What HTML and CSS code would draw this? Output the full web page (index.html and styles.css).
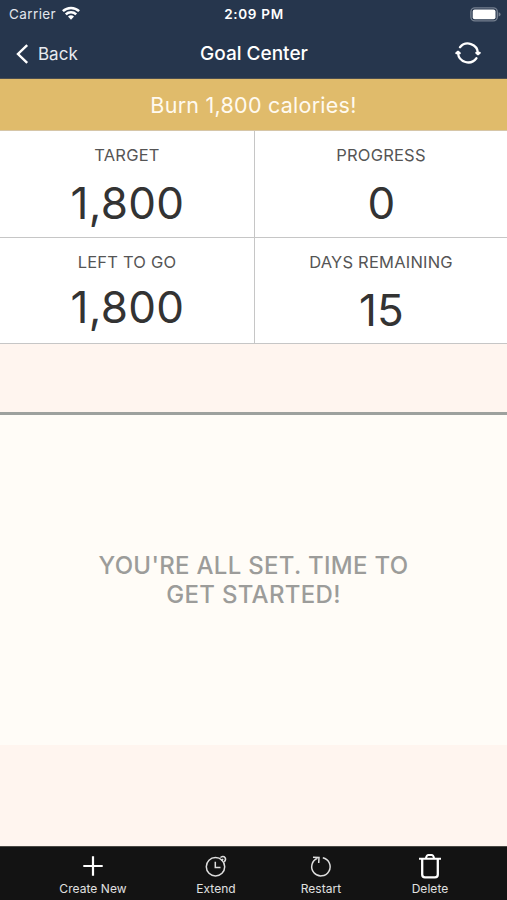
FILE: index.html
```
<!DOCTYPE html>
<html lang="en">
<head>
<meta charset="utf-8">
<title>Goal Center</title>
<link rel="stylesheet" href="styles.css">
</head>
<body>
<header class="header">
  <div class="status">
    <div class="carrier"><span>Carrier</span>
      <svg width="18" height="14" viewBox="0 0 18 14" fill="none" stroke="#fff" stroke-width="2.5"><path d="M.9 5.2a11.6 11.6 0 0 1 16.2 0M3.8 8.3a7.4 7.4 0 0 1 10.4 0"/><path d="M9 13.7 6 10.6a4.3 4.3 0 0 1 6 0Z" fill="#fff" stroke="none"/></svg>
    </div>
    <div class="time">2:09 PM</div>
    <svg class="battery" width="31" height="15" viewBox="0 0 31 15"><rect x=".9" y=".9" width="26.4" height="13" rx="4" fill="none" stroke="#747f8f" stroke-width="1.4"/><rect x="2.7" y="2.6" width="22.8" height="9.6" rx="2" fill="#fff"/><path d="M28.6 5.2q2 .6 2 2.2t-2 2.2Z" fill="#747f8f"/></svg>
  </div>
  <nav class="nav">
    <div class="back">
      <svg width="13" height="20" viewBox="0 0 13 20" fill="none" stroke="#fff" stroke-width="2.4"><path d="M11.2 1.2 2 10l9.2 8.8"/></svg>
      <span>Back</span>
    </div>
    <h1 class="title">Goal Center</h1>
    <svg class="sync" width="26" height="24" viewBox="0 0 26 24" fill="none" stroke="#fff" stroke-width="2.3" stroke-linecap="round"><path d="M5 6.2A10.2 10.2 0 0 1 23 12M21.4 17.2A10.2 10.2 0 0 1 3 12"/><path d="m21.4 11.8 1.6 1.4 1.6-1.4ZM1.4 12.2 3 10.8l1.6 1.4Z" fill="#fff" stroke-linejoin="round"/></svg>
  </nav>
</header>
<div class="banner"><span>Burn 1,800 calories!</span></div>
<main>
  <section class="stats">
    <div class="stat"><div class="label">TARGET</div><div class="value">1,800</div></div>
    <div class="stat"><div class="label">PROGRESS</div><div class="value">0</div></div>
    <div class="stat"><div class="label">LEFT TO GO</div><div class="value raised">1,800</div></div>
    <div class="stat"><div class="label">DAYS REMAINING</div><div class="value">15</div></div>
  </section>
  <div class="gap"></div>
  <section class="message"><p>YOU'RE ALL SET. TIME TO<br>GET STARTED!</p></section>
</main>
<footer class="toolbar">
  <div class="tool"><svg width="24" height="28" viewBox="0 0 24 28" fill="none" stroke="#fff" stroke-width="2.2"><path d="M12 3.3v19.4M2.3 13h19.4"/></svg><span>Create New</span></div>
  <div class="tool"><svg width="24" height="28" viewBox="0 0 24 28" fill="none" stroke="#dedede" stroke-width="1.5"><circle cx="11.5" cy="13.8" r="9.2"/><path d="M11.3 8.8v5.6h5.2M16.4 4.5q3-2 4.7.2 1.2 2-.8 4.3M17.2 7.6l2-1.6"/></svg><span>Extend</span></div>
  <div class="tool"><svg width="24" height="28" viewBox="0 0 24 28" fill="none" stroke="#dedede" stroke-width="1.5"><path d="M13.8 4.7A9.2 9.2 0 1 1 8.4 5.2M4 4.2l6 .2-.3 5.6"/></svg><span>Restart</span></div>
  <div class="tool"><svg width="24" height="28" viewBox="0 0 24 28" fill="none" stroke="#fff" stroke-width="2"><path d="M1 5.7h22M8 5q.6-3 2.4-3h3.2q1.8 0 2.4 3"/><path d="M4.2 6v15.5q0 2.8 2.8 2.8h10q2.8 0 2.8-2.8V6" stroke-width="2.3"/></svg><span>Delete</span></div>
</footer>
</body>
</html>
```
FILE: styles.css
```
* { box-sizing: border-box; }
body {
  margin: 0;
  width: 507px;
  height: 900px;
  display: flex;
  flex-direction: column;
  overflow: hidden;
  background: #fff5ef;
  font-family: Inter, "Liberation Sans", sans-serif;
}
svg { display: block; flex: none; }
main { flex: 1; }
.header { height: 79px; background: #26364d; color: #fff; border-bottom: 1px solid #4b4e50; }
.status {
  height: 27px;
  display: grid;
  grid-template-columns: 1fr auto 1fr;
  align-items: center;
  padding: 1px 6px 0 9px;
}
.carrier { display: flex; align-items: center; gap: 6px; font-size: 13.5px; color: #e2e6ec; letter-spacing: .4px; }
.carrier svg { margin-top: -3px; }
.time { margin-left: -2px; font-size: 13.5px; font-weight: 600; letter-spacing: .7px; }
.battery { justify-self: end; }
.nav {
  height: 51px;
  display: grid;
  grid-template-columns: 1fr auto 1fr;
  align-items: center;
  padding: 0 26px 0 16px;
}
.back { display: flex; align-items: center; gap: 9px; padding-top: 2px; font-size: 17px; color: #e8ebf0; }
.title { margin: 1px 0 0 11px; font-size: 19px; font-weight: 500; }
.sync { justify-self: end; }
.banner {
  height: 52px;
  display: flex;
  align-items: center;
  justify-content: center;
  background: #e0bb6b;
  border-bottom: 1px solid #d6c6a8;
  color: #fffaf0;
  font-size: 21.5px;
  letter-spacing: .25px;
}
.stats {
  display: grid;
  grid-template-columns: 255px 252px;
  grid-template-rows: 107px 106px;
  background: #fff;
  text-align: center;
}
.stat { border-bottom: 1px solid #c6c6c6; }
.stat:nth-child(odd) { border-right: 1px solid #c6c6c6; }
.label { margin-top: 14px; height: 20px; line-height: 20px; font-size: 16.5px; color: #555; letter-spacing: .2px; }
.value { margin-top: 11px; height: 54px; line-height: 54px; padding-left: 1px; font-size: 44px; color: #333; letter-spacing: .3px; }
.raised { margin-top: 8px; }
.gap { height: 68px; }
.message {
  height: 333px;
  border-top: 3px solid #9da19e;
  background: #fffcf7;
  padding-top: 136px;
  text-align: center;
}
.message p { margin: 0; font-size: 24px; line-height: 29px; font-weight: 550; color: #9c9c9a; letter-spacing: .3px; }
.toolbar {
  height: 54px;
  display: grid;
  grid-template-columns: 124px 122px 88px 130px;
  padding: 6px 0 0 31px;
  background: #131313;
  border-top: 1px solid #4a4945;
  color: #e0e0e0;
}
.tool { display: flex; flex-direction: column; align-items: center; font-size: 12px; line-height: 14px; white-space: nowrap; }
.tool span { padding-top: 1px; letter-spacing: .05px; }
```
